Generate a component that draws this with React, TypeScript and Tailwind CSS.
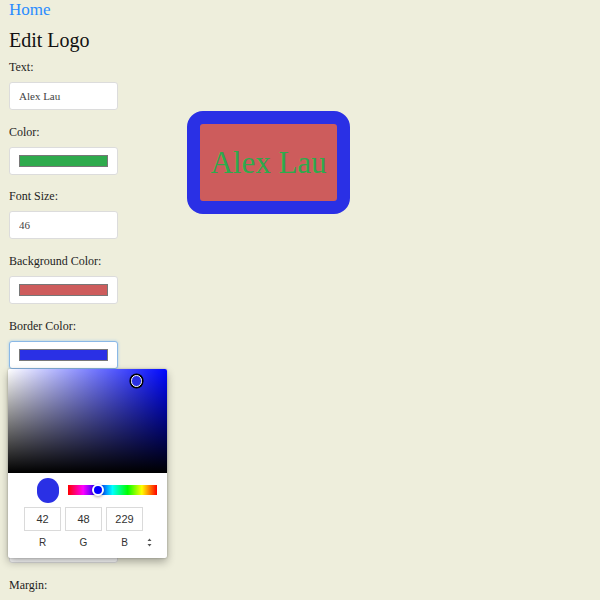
import React from 'react';

const serif = { fontFamily: '"Liberation Serif", "Times New Roman", serif' };

interface FieldProps {
  label: string;
  children: React.ReactNode;
}

const Field: React.FC<FieldProps> = ({ label, children }) => (
  <div className="relative">
    <div className="h-[14px] text-[12px] leading-[14px] text-[#1d1d1d]">{label}</div>
    <div className="mt-[8px]">{children}</div>
  </div>
);

const TextBox: React.FC<{ value: string }> = ({ value }) => (
  <input
    readOnly
    value={value}
    className="block h-[28px] w-[109px] rounded-[3px] border border-[#dcdcdc] bg-white pl-[9px] text-[11px] text-[#444] outline-none"
  />
);

const ColorBox: React.FC<{ color: string; focused?: boolean }> = ({ color, focused }) => (
  <div
    className={
      focused
        ? 'flex h-[28px] w-[109px] items-center rounded-[3px] border border-[#8ab8e6] bg-white px-[9px] shadow-[0_0_3px_#9ecaed]'
        : 'flex h-[28px] w-[109px] items-center rounded-[3px] border border-[#dcdcdc] bg-white px-[9px]'
    }
  >
    <div className="h-[12px] w-full border border-[#777]" style={{ backgroundColor: color }} />
  </div>
);

const ChromePicker: React.FC = () => (
  <div
    className="absolute left-[-1px] top-[50px] z-10 w-[159px] rounded-[2px] bg-white shadow-[0_0_2px_rgba(0,0,0,0.3),0_4px_8px_rgba(0,0,0,0.3)]"
    style={{ fontFamily: '"Liberation Sans", Arial, sans-serif' }}
  >
    {/* saturation */}
    <div className="relative h-[104px] rounded-t-[2px] bg-[#0008ff] bg-[image:linear-gradient(to_top,#000,rgba(0,0,0,0)),linear-gradient(to_right,#fff,rgba(255,255,255,0))]">
      <div className="absolute left-[123px] top-[6px] h-[12px] w-[11px] rounded-full border-[1.5px] border-white bg-[#2a30e5] shadow-[0_0_0_1.5px_#000]" />
    </div>
    <div className="pb-[9px] pt-[5px]">
      <div className="flex h-[25px] items-center gap-[9px] pl-[29px] pr-[10px]">
        <div className="h-[25px] w-[22px] shrink-0 rounded-full bg-[#2a30e5]" />
        <div className="relative h-[10px] flex-1 bg-[linear-gradient(to_right,#f00_0%,#f0f_17%,#00f_33%,#0ff_50%,#0f0_67%,#ff0_83%,#f00_100%)]">
          <div className="absolute left-[24px] top-[-1px] h-[12px] w-[12px] rounded-full border-2 border-white bg-[#0000ff] shadow-[0_1px_3px_rgba(0,0,0,0.35)]" />
        </div>
      </div>
      <div className="mt-[4px] flex items-start pl-[16px]">
        {[
          ['42', 'R'],
          ['48', 'G'],
          ['229', 'B'],
        ].map(([v, l], i) => (
          <div key={l} className={i > 0 ? 'ml-[4px] w-[37px]' : 'w-[37px]'}>
            <input
              readOnly
              value={v}
              className="block h-[24px] w-full border border-[#dadada] bg-white text-center text-[11px] text-[#333] outline-none"
            />
            <div className="mt-[6px] text-center text-[10px] leading-[12px] text-[#333]">{l}</div>
          </div>
        ))}
        <div className="ml-[3px] mt-[30px] flex h-[12px] w-[6px] items-center justify-center">
          <svg width="5" height="9" viewBox="0 0 5 9">
            <path d="M2.5 0.5 L4.5 3 L0.5 3 Z M0.5 6 L4.5 6 L2.5 8.5 Z" fill="#555" />
          </svg>
        </div>
      </div>
    </div>
  </div>
);

export default function App() {
  return (
    <div className="min-h-[600px] w-full bg-[#eeeedc] pl-[9px]" style={serif}>
      <a href="#" className="block h-[20px] text-[17px] leading-[20px] text-[#2a8cff]">
        Home
      </a>
      <h1 className="mt-[8px] h-[24px] text-[20px] leading-[24px] text-[#111]">Edit Logo</h1>
      <div className="mt-[8px] flex items-start">
        <div className="flex w-[109px] flex-col gap-[14.7px]">
          <Field label="Text:">
            <TextBox value="Alex Lau" />
          </Field>
          <Field label="Color:">
            <ColorBox color="#2eaa4c" />
          </Field>
          <Field label="Font Size:">
            <TextBox value="46" />
          </Field>
          <Field label="Background Color:">
            <ColorBox color="#cd5c5c" />
          </Field>
          <Field label="Border Color:">
            <ColorBox color="#2a30e5" focused />
            <ChromePicker />
          </Field>
          <Field label="Border Radius:">
            <TextBox value="16" />
          </Field>
          <Field label="Border Width:">
            <TextBox value="13" />
          </Field>
          <Field label="Padding:">
            <TextBox value="11" />
          </Field>
          <Field label="Margin:">
            <TextBox value="50" />
          </Field>
        </div>
        <div className="ml-[69px] mt-[51px]">
          <div className="flex h-[103px] w-[163px] items-center justify-center rounded-[16px] border-[13px] border-[#2a30e5] bg-[#cd5c5c]">
            <span className="text-[31px] leading-none text-[#2eaa4c]">Alex Lau</span>
          </div>
        </div>
      </div>
    </div>
  );
}
